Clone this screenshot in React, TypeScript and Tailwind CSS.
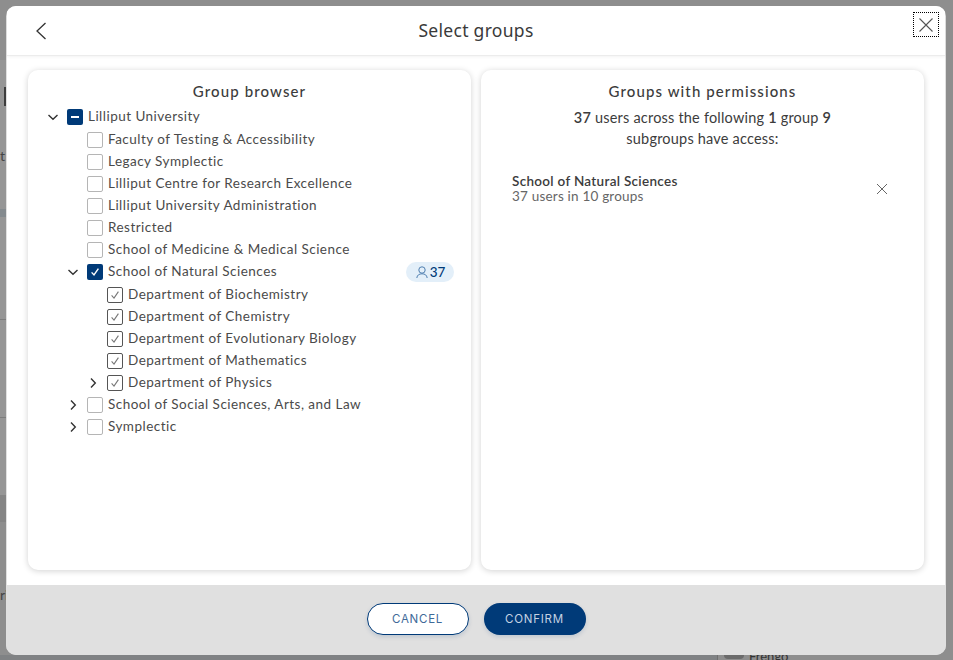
import React from "react";

const sans = "font-['Lato','Open_Sans','Liberation_Sans',sans-serif]";

function Chevron({ dir }: { dir: "down" | "right" }) {
  return (
    <svg width="16" height="16" viewBox="0 0 16 16" fill="none" stroke="#333" strokeWidth="1.4" className="shrink-0">
      {dir === "down" ? <path d="M3.5 6 L8 10.3 L12.5 6" /> : <path d="M6 3.5 L10.3 8 L6 12.5" />}
    </svg>
  );
}

function Box({ state }: { state: "none" | "mixed" | "on" | "inherit" }) {
  if (state === "mixed")
    return (
      <span className="w-4 h-4 shrink-0 rounded-[2px] bg-[#003a78] flex items-center justify-center">
        <span className="w-2 h-[2px] bg-white" />
      </span>
    );
  if (state === "on")
    return (
      <span className="w-4 h-4 shrink-0 rounded-[2px] bg-[#003a78] flex items-center justify-center">
        <svg width="12" height="12" viewBox="0 0 12 12" fill="none" stroke="#fff" strokeWidth="1.4">
          <path d="M2.6 6.4 L5 9 L9.4 2.6" />
        </svg>
      </span>
    );
  if (state === "inherit")
    return (
      <span className="w-4 h-4 shrink-0 rounded-[2px] border border-[#555] bg-white flex items-center justify-center">
        <svg width="12" height="12" viewBox="0 0 12 12" fill="none" stroke="#777" strokeWidth="1.1">
          <path d="M2.6 6.4 L5 9 L9.4 2.6" />
        </svg>
      </span>
    );
  return <span className="w-4 h-4 shrink-0 rounded-[2px] border border-[#b5b5b5] bg-white" />;
}

function Row({
  level,
  state,
  label,
  chevron,
  badge,
}: {
  level: 0 | 1 | 2;
  state: "none" | "mixed" | "on" | "inherit";
  label: string;
  chevron?: "down" | "right";
  badge?: boolean;
}) {
  const pad = level === 0 ? "pl-[17px]" : level === 1 ? "pl-[37px]" : "pl-[57px]";
  return (
    <div className={`h-[22px] flex items-center pr-[17px] ${pad}`}>
      <span className="w-4 h-4 mr-[6px] shrink-0 flex items-center justify-center">
        {chevron ? <Chevron dir={chevron} /> : null}
      </span>
      <Box state={state} />
      <span className="ml-[5px] mb-[2px] text-[13.5px] leading-[20px] tracking-[0.47px] text-[#4a4a4a] whitespace-nowrap">{label}</span>
      {badge ? (
        <span className="ml-auto h-5 w-12 rounded-full bg-[#e3eff9] flex items-center justify-center gap-[1px]">
          <svg width="14" height="14" viewBox="0 0 14 14" fill="none" stroke="#4f7fb0" strokeWidth="1">
            <circle cx="7" cy="5" r="3.2" />
            <path d="M1.8 13 C2.2 10 4.2 8.8 7 8.8 C9.8 8.8 11.8 10 12.2 13" />
          </svg>
          <span className="text-[13.5px] font-medium text-[#003a78]">37</span>
        </span>
      ) : null}
    </div>
  );
}

export default function App() {
  return (
    <div className={`relative w-[953px] h-[660px] overflow-hidden bg-[#8e8e8e] ${sans} flex flex-col pt-[6px] pl-[6px] pr-[7px]`}>
      {/* page dimmed behind the dialog */}
      <div className="absolute left-0 top-[60px] w-[6px] h-[440px] bg-[#969696]" />
      <div className="absolute left-[4px] top-[87px] w-[2px] h-[19px] bg-[#3d3d3d]" />
      <div className="absolute left-0 top-[148px] text-[14px] leading-4 text-[#444]">t</div>
      <div className="absolute left-0 top-[209px] w-[6px] h-[8px] bg-[#848a8e]" />
      <div className="absolute left-0 top-[319px] w-[6px] h-px bg-[#7d7d7d]" />
      <div className="absolute left-0 top-[417px] w-[6px] h-px bg-[#7d7d7d]" />
      <div className="absolute left-0 top-[495px] w-[6px] h-[27px] bg-[#858585]" />
      <div className="absolute left-0 top-[587px] text-[14px] leading-4 text-[#444]">ri</div>
      <div className="absolute left-0 right-0 bottom-0 h-[5px] bg-[#808284]" />
      <div className="absolute left-[717px] bottom-0 w-[238px] h-[5px] border-l border-[#6f6f6f] bg-[#8e8e8e] overflow-hidden">
        <span className="absolute left-[6px] top-0 w-[20px] h-[4px] rounded-b-full bg-[#6b6b6b]" />
        <span className="absolute left-[31px] top-[-7px] text-[13px] leading-4 text-[#333]">Frengo</span>
      </div>

      {/* dialog */}
      <div className="relative z-10 w-[940px] h-[649px] rounded-[10px] overflow-hidden bg-[#e0e0e0] flex flex-col">
        <div className="flex-1 min-h-0 mx-[1px] bg-white flex flex-col">
          <header className="relative h-[50px] shrink-0 flex items-center justify-center border-b border-[#ececec] shadow-[0_1px_3px_rgba(0,0,0,0.05)]">
            <svg width="14" height="20" viewBox="0 0 14 20" fill="none" stroke="#333" strokeWidth="1.3" className="absolute left-[27px] top-[15px]">
              <path d="M11.5 2 L3 10 L11.5 18" />
            </svg>
            <h1 className="font-['Noto_Sans',sans-serif] text-[17.5px] tracking-[0.3px] text-[#3a3a3a] font-normal">Select groups</h1>
            <button className="absolute right-[6px] top-[6px] w-[26px] h-[25px] border border-dotted border-black flex items-center justify-center">
              <svg width="16" height="16" viewBox="0 0 16 16" fill="none" stroke="#555" strokeWidth="1.1">
                <path d="M1.5 1.5 L14.5 14.5 M14.5 1.5 L1.5 14.5" />
              </svg>
            </button>
          </header>

          <main className="flex-1 min-h-0 flex gap-[10px] pl-[21px] pr-[21px] pt-[14px] pb-[15px]">
            <section className="w-[443px] rounded-[10px] bg-white shadow-[0_1px_6px_rgba(0,0,0,0.18)] pt-[11px]">
              <h2 className="text-center text-[15px] leading-5 tracking-[1.1px] font-medium text-[#3c3c3c]">Group browser</h2>
              <div className="mt-[5px]">
                <Row level={0} state="mixed" label="Lilliput University" chevron="down" />
                <div className="mt-px">
                  <Row level={1} state="none" label="Faculty of Testing & Accessibility" />
                  <Row level={1} state="none" label="Legacy Symplectic" />
                  <Row level={1} state="none" label="Lilliput Centre for Research Excellence" />
                  <Row level={1} state="none" label="Lilliput University Administration" />
                  <Row level={1} state="none" label="Restricted" />
                  <Row level={1} state="none" label="School of Medicine & Medical Science" />
                  <Row level={1} state="on" label="School of Natural Sciences" chevron="down" badge />
                  <div className="mt-px">
                    <Row level={2} state="inherit" label="Department of Biochemistry" />
                    <Row level={2} state="inherit" label="Department of Chemistry" />
                    <Row level={2} state="inherit" label="Department of Evolutionary Biology" />
                    <Row level={2} state="inherit" label="Department of Mathematics" />
                    <Row level={2} state="inherit" label="Department of Physics" chevron="right" />
                  </div>
                  <Row level={1} state="none" label="School of Social Sciences, Arts, and Law" chevron="right" />
                  <Row level={1} state="none" label="Symplectic" chevron="right" />
                </div>
              </div>
            </section>

            <section className="w-[443px] rounded-[10px] bg-white shadow-[0_1px_6px_rgba(0,0,0,0.18)] pt-[11px]">
              <h2 className="text-center text-[15px] leading-5 tracking-[1.1px] font-medium text-[#3c3c3c]">Groups with permissions</h2>
              <p className="mt-[6px] text-center text-[14.5px] leading-[21px] tracking-[0.2px] text-[#3c3c3c] px-[60px]">
                <b className="font-semibold">37</b> users across the following <b className="font-semibold">1</b> group <b className="font-semibold">9</b>
                <br />
                subgroups have access:
              </p>
              <div className="mt-[25px] pl-[31px] pr-[36px] flex items-center justify-between">
                <div>
                  <div className="text-[13.5px] leading-[15px] tracking-[0.3px] font-semibold text-[#3c3c3c]">School of Natural Sciences</div>
                  <div className="text-[13.5px] leading-[15px] tracking-[0.2px] text-[#666]">37 users in 10 groups</div>
                </div>
                <svg width="12" height="12" viewBox="0 0 12 12" fill="none" stroke="#666" strokeWidth="1">
                  <path d="M1 1 L11 11 M11 1 L1 11" />
                </svg>
              </div>
            </section>
          </main>
        </div>

        <footer className="h-[70px] shrink-0 bg-[#e0e0e0] flex items-center justify-center gap-[15px] pb-[2px]">
          <button className="w-[102px] h-[32px] pt-[2px] rounded-full bg-white border border-[#003a78] text-[11.5px] tracking-[0.75px] text-[#3f6a99] shadow-[0_2px_4px_rgba(0,58,120,0.15)] font-['Inter',sans-serif]">
            CANCEL
          </button>
          <button className="w-[102px] h-[32px] pt-[2px] rounded-full bg-[#003a78] text-[11.5px] tracking-[0.75px] text-[#c4d2e2] shadow-[0_2px_4px_rgba(0,58,120,0.15)] font-['Inter',sans-serif]">
            CONFIRM
          </button>
        </footer>
      </div>
    </div>
  );
}
